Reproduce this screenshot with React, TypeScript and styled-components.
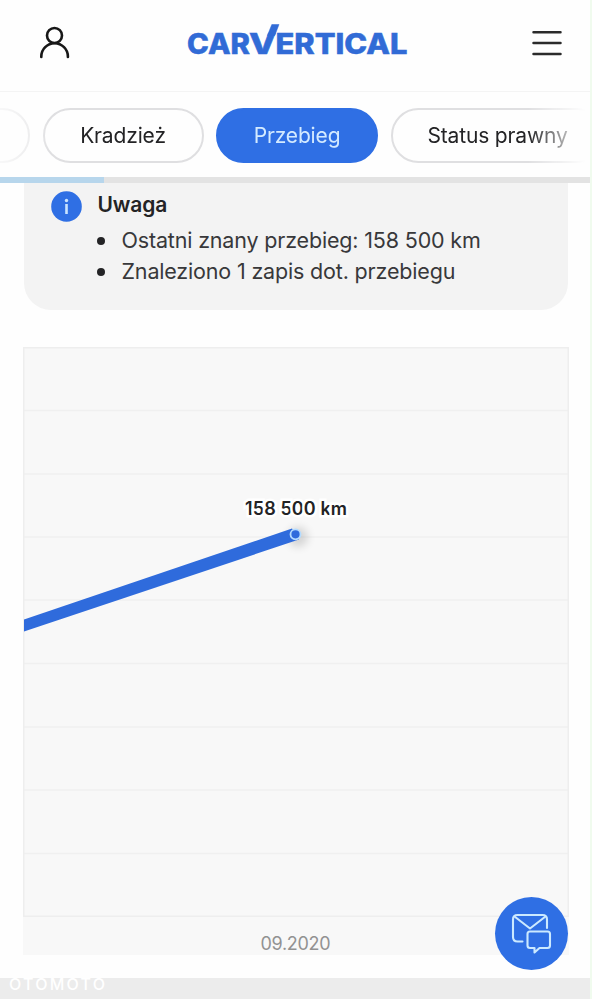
import React from "react";
import styled, { createGlobalStyle } from "styled-components";

const GlobalStyle = createGlobalStyle`
  * {
    box-sizing: border-box;
  }

  body {
    margin: 0;
    background: #fefefe;
    font-family: "Inter", sans-serif;
    color: #232325;
  }
`;

const Page = styled.div`
  width: 592px;
  height: 999px;
  display: flex;
  flex-direction: column;
  overflow: hidden;
  border-right: 2px solid #f0fbee;
`;

const Header = styled.header`
  flex: none;
  height: 92px;
  display: flex;
  align-items: flex-start;
  padding: 20px 0 0 38px;
  border-bottom: 1px solid #f4f4f4;
`;

const IconButton = styled.button`
  display: flex;
  padding: 0;
  border: none;
  background: transparent;
  cursor: pointer;
`;

const Logo = styled.svg`
  margin: 0 121px 0 115px;
  fill: #316bd6;
  stroke: #316bd6;
  stroke-width: 0.5;
  font-family: "Inter", sans-serif;
  font-size: 28px;
  font-weight: 800;
`;

const Tabs = styled.nav`
  flex: none;
  height: 85px;
  display: flex;
  gap: 12.5px;
  padding-top: 16px;
  overflow: hidden;
  mask-image: linear-gradient(
    to right,
    rgba(0, 0, 0, 0.2),
    rgba(0, 0, 0, 0.5) 30px,
    #000 50px,
    #000 528px,
    transparent 586px
  );
`;

const Tab = styled.button<{ $width: number; $active?: boolean }>`
  flex: none;
  width: ${({ $width }) => $width}px;
  height: 55px;
  padding: 0;
  border: 2px solid ${({ $active }) => ($active ? "#2f6fe4" : "#dfdfe1")};
  border-radius: 28px;
  background: ${({ $active }) => ($active ? "#2f6fe4" : "#fefefe")};
  color: ${({ $active }) => ($active ? "#d3eaff" : "#232325")};
  font-family: inherit;
  font-size: 21px;
  letter-spacing: -0.15px;
  cursor: pointer;

  &:first-child {
    margin-left: -132px;
  }
`;

const Progress = styled.div`
  flex: none;
  height: 6px;
  background: #e3e3e3;
`;

const ProgressBar = styled.div`
  width: 104px;
  height: 100%;
  background: #b7d6ec;
`;

const Notice = styled.section`
  flex: none;
  width: 544px;
  height: 127px;
  margin-left: 24px;
  display: flex;
  gap: 15.5px;
  padding: 8px 27px;
  background: #f3f3f3;
  border-radius: 0 0 27px 27px;
`;

const InfoIcon = styled.svg`
  flex: none;
`;

const NoticeTitle = styled.h2`
  margin: 0;
  font-size: 21px;
  font-weight: 600;
  line-height: 28px;
  letter-spacing: -0.15px;
`;

const NoticeList = styled.ul`
  margin: 6px 0 0;
  padding: 0 0 0 24px;
  list-style: none;
  color: #38383a;
  font-size: 21.5px;
  line-height: 30.5px;
  letter-spacing: -0.17px;
`;

const NoticeItem = styled.li`
  position: relative;

  &::before {
    content: "";
    position: absolute;
    left: -25px;
    top: 12px;
    width: 8px;
    height: 8px;
    border-radius: 50%;
    background: #232325;
  }
`;

const ChartPanel = styled.section`
  flex: none;
  width: 546px;
  height: 608px;
  margin: 37px 0 0 23px;
  background: #f8f8f8;
`;

const Chart = styled.svg`
  display: block;
  font-family: "Inter", sans-serif;
`;

const Footer = styled.footer`
  flex: 1;
  margin-top: 23px;
  padding: 0 9px;
  display: flex;
  align-items: flex-start;
  background: #ececec;
`;

const Watermark = styled.svg`
  overflow: visible;
  fill: #fff;
  font-family: "Inter", sans-serif;
  font-size: 16px;
  font-weight: 500;
`;

const ChatButton = styled.button`
  position: absolute;
  left: 495px;
  top: 897px;
  width: 73px;
  height: 73px;
  display: flex;
  padding: 0;
  border: none;
  border-radius: 50%;
  background: #2f6fe4;
  cursor: pointer;
`;

const GRID_LINES = [63.5, 127, 190, 253, 316.5, 380, 443, 506.5];

const App = () => {
  return (
    <>
      <GlobalStyle />
      <Page>
        <Header>
          <IconButton aria-label="Konto">
            <svg width="34" height="44" fill="none" stroke="#171717" strokeWidth="2.6">
              <circle cx="16.5" cy="15.5" r="7.5" />
              <path d="M3.3 37v-.5a13.3 13.3 0 0 1 26.6 0v.5" strokeLinecap="round" />
            </svg>
          </IconButton>
          <Logo width="222" height="40">
            <text x="0" y="33.7" textLength="63" lengthAdjust="spacingAndGlyphs">
              CAR
            </text>
            <text x="62" y="33.7" textLength="27" lengthAdjust="spacingAndGlyphs">
              V
            </text>
            <path d="M80.8 14.5L84.8 4.5H92L87.8 15.5H80.4Z" />
            <text x="88.5" y="33.7" textLength="132" lengthAdjust="spacingAndGlyphs">
              ERTICAL
            </text>
          </Logo>
          <IconButton aria-label="Menu">
            <svg width="32" height="44" stroke="#2b2b2b" strokeWidth="2.5" strokeLinecap="round">
              <path d="M3.5 12.3H30.5M3.5 23.1H30.5M3.5 34H30.5" />
            </svg>
          </IconButton>
        </Header>

        <Tabs>
          <Tab $width={162} />
          <Tab $width={161}>Kradzież</Tab>
          <Tab $width={162} $active>
            Przebieg
          </Tab>
          <Tab $width={214}>Status prawny</Tab>
        </Tabs>
        <Progress>
          <ProgressBar />
        </Progress>

        <Notice>
          <InfoIcon width="31" height="31">
            <circle cx="15.5" cy="15.5" r="15.3" fill="#2f6fe4" />
            <path d="M15.5 13V23" stroke="#c9e4ff" strokeWidth="2.6" />
            <circle cx="15.5" cy="9.5" r="1.7" fill="#c9e4ff" />
          </InfoIcon>
          <div>
            <NoticeTitle>Uwaga</NoticeTitle>
            <NoticeList>
              <NoticeItem>Ostatni znany przebieg: 158 500 km</NoticeItem>
              <NoticeItem>Znaleziono 1 zapis dot. przebiegu</NoticeItem>
            </NoticeList>
          </div>
        </Notice>

        <ChartPanel>
          <Chart width="546" height="608">
            <defs>
              <filter id="glow" x="-100%" y="-100%" width="300%" height="300%">
                <feGaussianBlur stdDeviation="4" />
              </filter>
            </defs>
            {GRID_LINES.map((y) => (
              <line key={y} x1="0" x2="546" y1={y} y2={y} stroke="#f0f0f0" strokeWidth="1.5" />
            ))}
            <rect x="0.75" y="0.75" width="544.5" height="568.5" fill="none" stroke="#eeeeee" strokeWidth="1.5" />
            <circle cx="275" cy="190" r="10" fill="#000" opacity="0.14" filter="url(#glow)" />
            <path d="M1 272.5L269 181.5L276 192.5L1 284.5Z" fill="#2f6bdc" />
            <circle cx="272.5" cy="187.3" r="5" fill="#2f6bdc" stroke="#b5dcff" strokeWidth="1.8" />
            <text
              x="222"
              y="167.5"
              textLength="102"
              fontSize="18"
              fontWeight="600"
              fill="#232325"
              stroke="#fff"
              strokeWidth="5"
              paintOrder="stroke"
            >
              158 500 km
            </text>
            <text x="237.5" y="603" textLength="70" fontSize="18" fill="#929292">
              09.2020
            </text>
          </Chart>
        </ChartPanel>

        <Footer>
          <Watermark width="96" height="16">
            <text x="0" y="11.5" textLength="96">
              OTOMOTO
            </text>
          </Watermark>
        </Footer>

        <ChatButton aria-label="Czat">
          <svg width="73" height="73" fill="none" stroke="#cbe9ff" strokeWidth="2.1" strokeLinejoin="round" strokeLinecap="round">
            <path d="M27.5 44.5H22.5Q18 44.5 18 40V22.5Q18 18 22.5 18H47.5Q52 18 52 22.5V31" />
            <path d="M19.5 19.5L35 31.5L50.5 19.5" />
            <path d="M35 34.5H52.5Q55 34.5 55 37V48.5Q55 51 52.5 51H44.5L39.5 55.5V51H35Q32.5 51 32.5 48.5V37Q32.5 34.5 35 34.5Z" />
          </svg>
        </ChatButton>
      </Page>
    </>
  );
};

export default App;
